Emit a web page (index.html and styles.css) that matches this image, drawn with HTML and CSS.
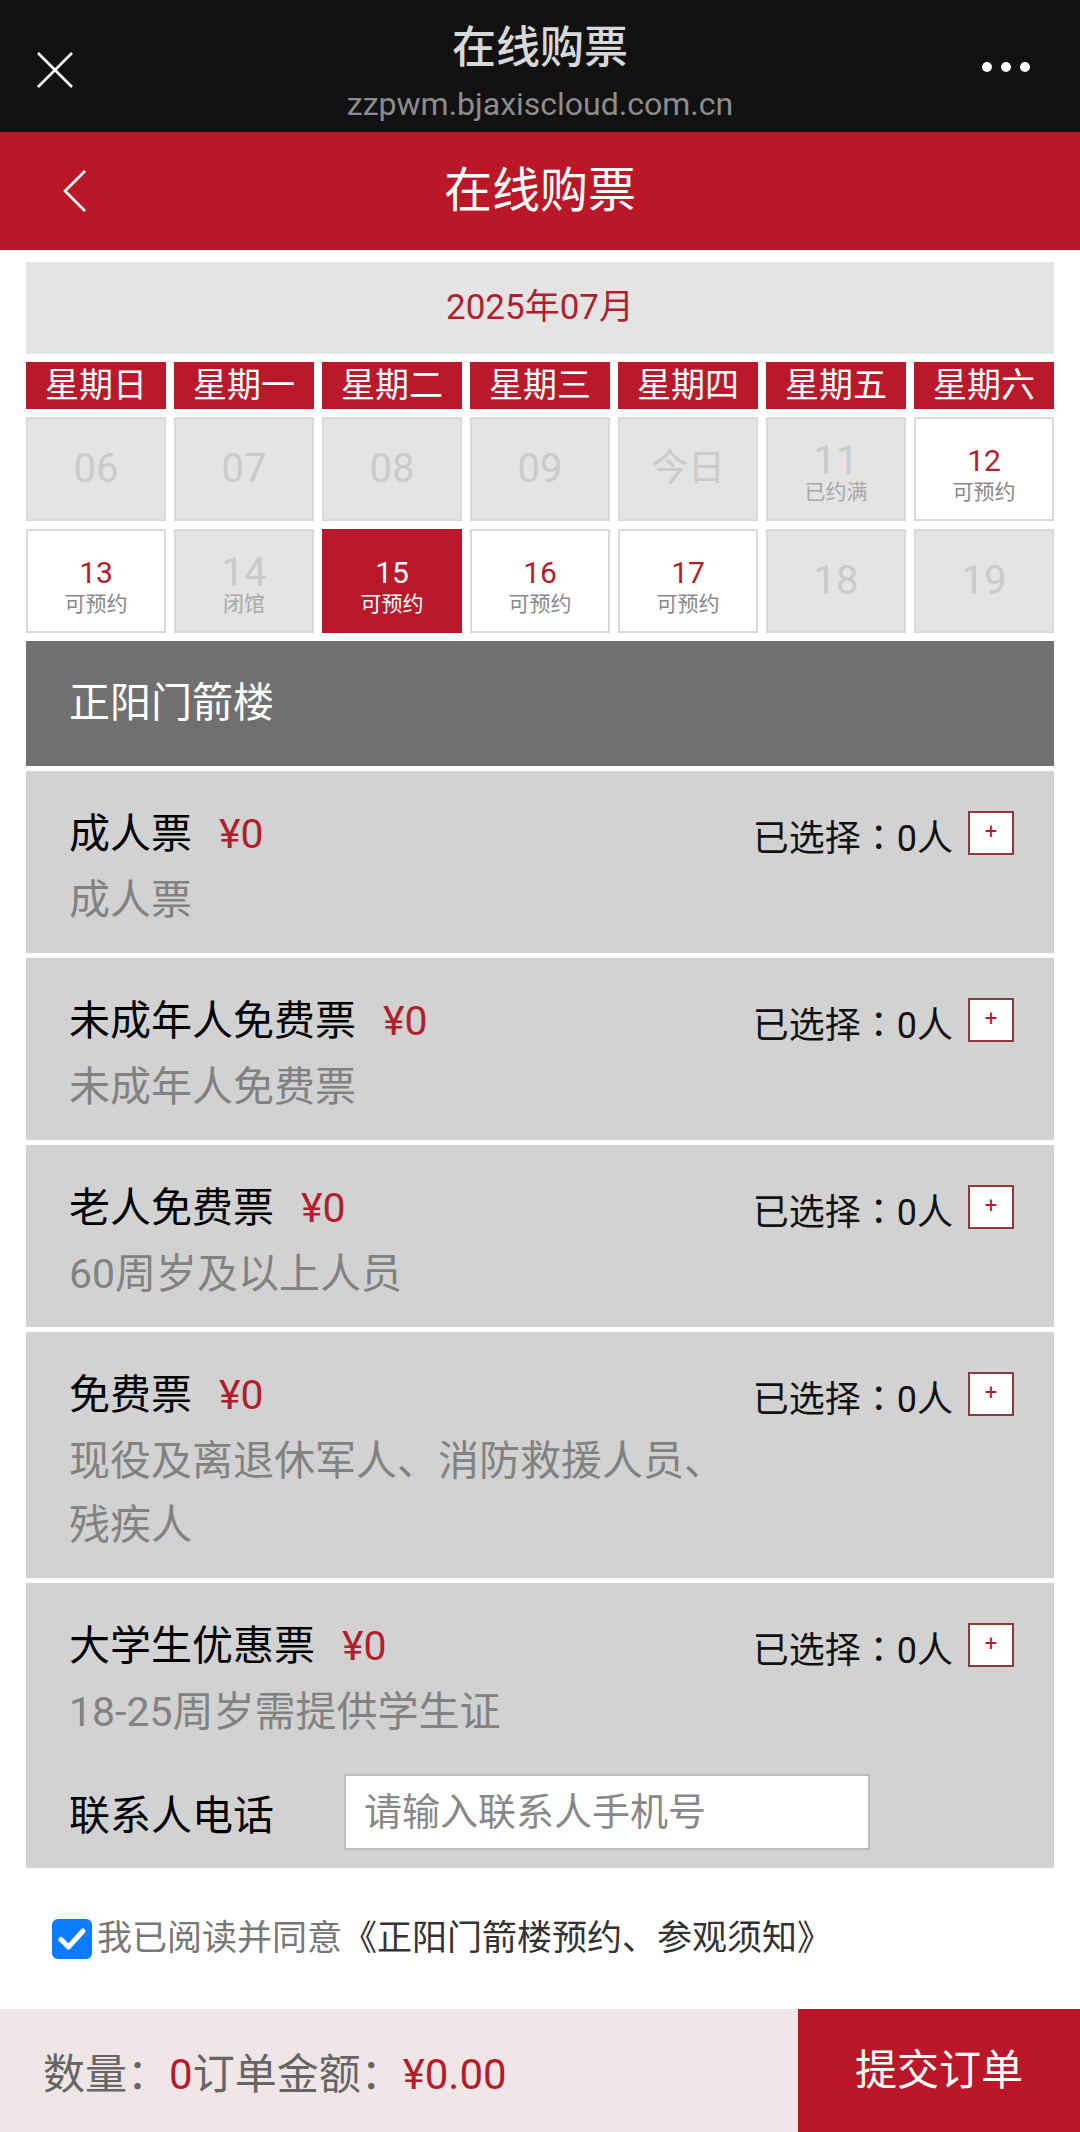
FILE: index.html
```html
<!DOCTYPE html>
<html lang="zh-CN">
<head>
<meta charset="utf-8">
<title>在线购票</title>
<link rel="stylesheet" href="styles.css">
</head>
<body>
<div class="wx-bar">
  <div class="wx-close">
    <svg width="38" height="38" viewBox="0 0 38 38"><path d="M2 2L36 36M36 2L2 36" stroke="#fff" stroke-width="2.6" fill="none"/></svg>
  </div>
  <div class="wx-title">
    <div class="wx-name">在线购票</div>
    <div class="wx-url">zzpwm.bjaxiscloud.com.cn</div>
  </div>
  <div class="wx-more"><span></span><span></span><span></span></div>
</div>

<header class="app-head">
  <div class="back">
    <svg width="26" height="44" viewBox="0 0 26 44"><polyline points="23,2 3,22 23,42" stroke="#fff" stroke-width="2.6" fill="none"/></svg>
  </div>
  <h1 class="app-title">在线购票</h1>
</header>

<main class="content">
  <div class="month">2025年07月</div>
  <div class="cal">
    <div class="wd">星期日</div>
    <div class="wd">星期一</div>
    <div class="wd">星期二</div>
    <div class="wd">星期三</div>
    <div class="wd">星期四</div>
    <div class="wd">星期五</div>
    <div class="wd">星期六</div>

    <div class="day off"><span class="num">06</span></div>
    <div class="day off"><span class="num">07</span></div>
    <div class="day off"><span class="num">08</span></div>
    <div class="day off"><span class="num">09</span></div>
    <div class="day off"><span class="today">今日</span></div>
    <div class="day off sub"><span class="num">11</span><span class="note">已约满</span></div>
    <div class="day open sub"><span class="num">12</span><span class="note">可预约</span></div>

    <div class="day open sub"><span class="num">13</span><span class="note">可预约</span></div>
    <div class="day off sub"><span class="num">14</span><span class="note">闭馆</span></div>
    <div class="day sel sub"><span class="num">15</span><span class="note">可预约</span></div>
    <div class="day open sub"><span class="num">16</span><span class="note">可预约</span></div>
    <div class="day open sub"><span class="num">17</span><span class="note">可预约</span></div>
    <div class="day off"><span class="num">18</span></div>
    <div class="day off"><span class="num">19</span></div>
  </div>

  <div class="venue">正阳门箭楼</div>

  <div class="ticket">
    <div class="t-info">
      <div class="t-name">成人票<span class="t-price">¥0</span></div>
      <div class="t-desc">成人票</div>
    </div>
    <div class="t-count">已选择<span class="colon">：</span>0人<span class="plus">+</span></div>
  </div>

  <div class="ticket">
    <div class="t-info">
      <div class="t-name">未成年人免费票<span class="t-price">¥0</span></div>
      <div class="t-desc">未成年人免费票</div>
    </div>
    <div class="t-count">已选择<span class="colon">：</span>0人<span class="plus">+</span></div>
  </div>

  <div class="ticket">
    <div class="t-info">
      <div class="t-name">老人免费票<span class="t-price">¥0</span></div>
      <div class="t-desc">60周岁及以上人员</div>
    </div>
    <div class="t-count">已选择<span class="colon">：</span>0人<span class="plus">+</span></div>
  </div>

  <div class="ticket">
    <div class="t-info">
      <div class="t-name">免费票<span class="t-price">¥0</span></div>
      <div class="t-desc">现役及离退休军人、消防救援人员、残疾人</div>
    </div>
    <div class="t-count">已选择<span class="colon">：</span>0人<span class="plus">+</span></div>
  </div>

  <div class="ticket last">
    <div class="t-main">
      <div class="t-info">
        <div class="t-name">大学生优惠票<span class="t-price">¥0</span></div>
        <div class="t-desc">18-25周岁需提供学生证</div>
      </div>
      <div class="t-count">已选择<span class="colon">：</span>0人<span class="plus">+</span></div>
    </div>
    <div class="phone-row">
      <span class="phone-label">联系人电话</span>
      <div class="phone-input">请输入联系人手机号</div>
    </div>
  </div>
</main>

<div class="agree">
  <span class="check">
    <svg width="28" height="24" viewBox="0 0 28 24"><path d="M3 12.5L10.5 20L25 4" stroke="#fff" stroke-width="5" fill="none" stroke-linecap="round" stroke-linejoin="round"/></svg>
  </span>
  <span class="agree-text">我已阅读并同意<span class="agree-doc">《正阳门箭楼预约、参观须知》</span></span>
</div>

<footer class="bottom">
  <div class="sum">数量<span class="colon">：</span><span class="red">0</span>订单金额<span class="colon">：</span><span class="red">¥0.00</span></div>
  <div class="submit">提交订单</div>
</footer>
</body>
</html>
```

FILE: styles.css
```css
* { box-sizing: border-box; }

html, body {
  margin: 0;
  padding: 0;
  background: #fff;
}

body {
  width: 1080px;
  font-family: Roboto, "Noto Sans CJK SC", sans-serif;
  color: #000;
}

.colon {
  font-family: "Noto Sans CJK TC", "Noto Sans CJK SC", sans-serif;
}

/* WeChat top bar */
.wx-bar {
  height: 132px;
  background: #111111;
  display: grid;
  grid-template-columns: 1fr auto 1fr;
  align-items: start;
}

.wx-close {
  padding: 51px 0 0 36px;
  height: 132px;
}

.wx-close svg { display: block; }

.wx-title {
  padding-top: 22px;
  text-align: center;
}

.wx-name {
  font-size: 44px;
  line-height: 52px;
  color: #d8d8d8;
  font-weight: 500;
}

.wx-url {
  margin-top: 12px;
  font-size: 32px;
  line-height: 36px;
  color: #8c8c8c;
}

.wx-more {
  justify-self: end;
  display: flex;
  gap: 9px;
  padding: 62px 50px 0 0;
}

.wx-more span {
  width: 10px;
  height: 10px;
  border-radius: 50%;
  background: #fff;
}

/* App header */
.app-head {
  height: 118px;
  background: #ba1828;
  display: flex;
  align-items: center;
  justify-content: center;
  position: relative;
}

.back {
  position: absolute;
  left: 62px;
  top: 37px;
}

.back svg { display: block; }

.app-title {
  margin: 0;
  font-size: 48px;
  line-height: 60px;
  font-weight: 400;
  color: #fff;
}

/* Content */
.content {
  padding: 12px 26px 0;
}

.month {
  height: 92px;
  background: #e4e4e4;
  color: #b01f2d;
  font-size: 35px;
  line-height: 92px;
  text-align: center;
}

.cal {
  margin-top: 8px;
  display: grid;
  grid-template-columns: repeat(7, 140px);
  grid-auto-rows: 104px;
  grid-template-rows: 47px;
  gap: 8px;
}

.wd {
  background: #b9192a;
  color: #fff;
  font-size: 34px;
  line-height: 47px;
  text-align: center;
}

.day {
  border: 2px solid #dadada;
  display: flex;
  flex-direction: column;
  align-items: center;
  justify-content: center;
}

.day.sub { padding-top: 10px; }

.day.off { background: #e4e4e4; color: #cbcbcb; }
.day.open { background: #fff; color: #b01f2d; }
.day.sel { background: #b9192a; border-color: #b9192a; color: #fff; }

.num {
  font-size: 40px;
  line-height: 44px;
}

.day.open .num, .day.sel .num {
  font-size: 30px;
  line-height: 36px;
}

.day.sub .num { line-height: 36px; }

.today {
  font-size: 37px;
  line-height: 44px;
}

.note {
  font-size: 21px;
  line-height: 26px;
}

.day.open .note { color: #888; }
.day.off .note { color: #a9a9a9; }
.day.sel .note { color: #fff; }

/* Venue */
.venue {
  margin-top: 8px;
  height: 125px;
  background: #707070;
  color: #fff;
  font-size: 41px;
  line-height: 125px;
  padding-left: 43px;
}

/* Tickets */
.ticket {
  margin-top: 5px;
  background: #d2d2d2;
  padding: 30px 40px 21px 43px;
  display: flex;
  justify-content: space-between;
  align-items: flex-start;
}

.ticket.last {
  display: block;
  padding-bottom: 18px;
}

.t-main {
  display: flex;
  justify-content: space-between;
  align-items: flex-start;
}

.t-info { width: 660px; }

.t-name {
  font-size: 41px;
  line-height: 67px;
  color: #000;
}

.t-price {
  color: #b01f2d;
  margin-left: 27px;
}

.t-desc {
  font-size: 41px;
  line-height: 64px;
  color: #828282;
}

.t-count {
  height: 67px;
  display: flex;
  align-items: center;
  font-size: 36px;
  color: #111;
  white-space: nowrap;
}

.plus {
  margin-left: 15px;
  width: 46px;
  height: 44px;
  margin-top: -4px;
  border: 2px solid #8e3a3a;
  background: #fff;
  color: #b01f2d;
  font-size: 22px;
  line-height: 38px;
  text-align: center;
}

.phone-row {
  margin-top: 30px;
  display: flex;
  align-items: center;
}

.phone-label {
  width: 275px;
  font-size: 41px;
  line-height: 50px;
  padding-top: 8px;
}

.phone-input {
  width: 526px;
  height: 76px;
  background: #fff;
  border: 2px solid #bdbdbd;
  font-size: 38px;
  line-height: 72px;
  padding-left: 18px;
  color: #888;
}

/* Agreement */
.agree {
  height: 141px;
  display: flex;
  align-items: center;
  padding-left: 52px;
}

.check {
  width: 40px;
  height: 40px;
  border-radius: 6px;
  background: #0b7bff;
  display: flex;
  align-items: center;
  justify-content: center;
}

.check svg { display: block; }

.agree-text {
  margin-left: 5px;
  font-size: 35px;
  line-height: 44px;
  color: #777;
}

.agree-doc { color: #333; }

/* Bottom bar */
.bottom {
  height: 124px;
  display: flex;
}

.sum {
  flex: 1;
  background: #f0e6e8;
  padding-left: 43px;
  font-size: 42px;
  line-height: 124px;
  color: #666;
}

.red { color: #b51c2b; }

.submit {
  width: 282px;
  background: #ba1828;
  color: #fff;
  font-size: 42px;
  line-height: 124px;
  text-align: center;
}
```
